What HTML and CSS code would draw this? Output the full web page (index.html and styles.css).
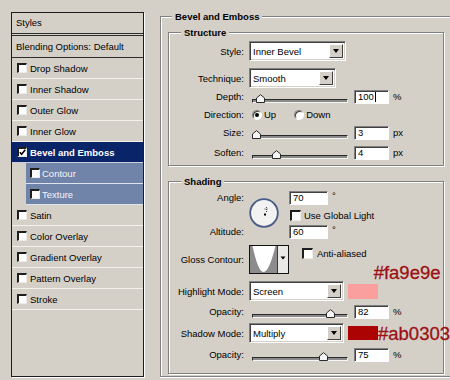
FILE: index.html
```html
<!DOCTYPE html>
<html>
<head>
<meta charset="utf-8">
<link rel="stylesheet" href="styles.css">
</head>
<body>
<div class="dialog">
  <div class="styles-list">
    <div class="list-header">Styles</div>
    <div class="list-blend">Blending Options: Default</div>
    <div class="list-row"><span class="cb"></span>Drop Shadow</div>
    <div class="list-row"><span class="cb"></span>Inner Shadow</div>
    <div class="list-row"><span class="cb"></span>Outer Glow</div>
    <div class="list-row"><span class="cb"></span>Inner Glow</div>
    <div class="list-row selected"><span class="cb"><svg width="7" height="7" viewBox="0 0 7 7"><path d="M0.8 3.2 L2.6 5.2 L6.3 0.8" fill="none" stroke="#000" stroke-width="1.6"/></svg></span>Bevel and Emboss</div>
    <div class="list-row sub"><span class="cb"></span>Contour</div>
    <div class="list-row sub"><span class="cb"></span>Texture</div>
    <div class="list-row"><span class="cb"></span>Satin</div>
    <div class="list-row"><span class="cb"></span>Color Overlay</div>
    <div class="list-row"><span class="cb"></span>Gradient Overlay</div>
    <div class="list-row"><span class="cb"></span>Pattern Overlay</div>
    <div class="list-row"><span class="cb"></span>Stroke</div>
  </div>

  <div class="group outer">
    <div class="group-title title-outer">Bevel and Emboss</div>

    <div class="group inner structure">
      <div class="group-title title-inner">Structure</div>

      <div class="row h20">
        <span class="lbl">Style:</span>
        <div class="select w-style"><span class="sel-text">Inner Bevel</span><span class="drop"></span></div>
      </div>
      <div class="row h20 mt7">
        <span class="lbl">Technique:</span>
        <div class="select w-tech"><span class="sel-text">Smooth</span><span class="drop"></span></div>
      </div>
      <div class="row h17">
        <span class="lbl">Depth:</span>
        <div class="slider"><span class="track"></span><svg class="thumb" style="left:calc(8% - 4px)" width="9" height="9" viewBox="0 0 9 9"><path d="M0.5 8.5 V4 L4.5 0.7 L8.5 4 V8.5 Z" fill="#f4f4f4" stroke="#2a2a2a"/></svg></div>
        <div class="num">100<span class="caret"></span></div>
        <span class="unit">%</span>
      </div>
      <div class="row h19">
        <span class="lbl">Direction:</span>
        <span class="radio on"></span><span class="radio-text">Up</span>
        <span class="radio second"></span><span class="radio-text">Down</span>
      </div>
      <div class="row h17">
        <span class="lbl">Size:</span>
        <div class="slider"><span class="track"></span><svg class="thumb" style="left:calc(4% - 4px)" width="9" height="9" viewBox="0 0 9 9"><path d="M0.5 8.5 V4 L4.5 0.7 L8.5 4 V8.5 Z" fill="#f4f4f4" stroke="#2a2a2a"/></svg></div>
        <div class="num">3</div>
        <span class="unit">px</span>
      </div>
      <div class="row h17 mt3">
        <span class="lbl">Soften:</span>
        <div class="slider"><span class="track"></span><svg class="thumb" style="left:calc(25% - 4px)" width="9" height="9" viewBox="0 0 9 9"><path d="M0.5 8.5 V4 L4.5 0.7 L8.5 4 V8.5 Z" fill="#f4f4f4" stroke="#2a2a2a"/></svg></div>
        <div class="num">4</div>
        <span class="unit">px</span>
      </div>
    </div>

    <div class="group inner shading">
      <div class="group-title title-inner">Shading</div>

      <div class="angle-block">
        <div class="angle-labels">
          <span class="alabel">Angle:</span>
          <span class="alabel">Altitude:</span>
        </div>
        <svg class="dial" width="30" height="30" viewBox="0 0 30 30">
          <circle cx="15" cy="15" r="13.8" fill="#f2f2f2" stroke="#4a5c86" stroke-width="1.8"/>
          <path d="M17.5 9 V14 M15.5 11 H19.5" stroke="#444" stroke-width="1" stroke-dasharray="1 1"/>
          <rect x="15" y="15.5" width="2" height="2" fill="#000"/>
        </svg>
        <div class="angle-controls">
          <div class="arow"><div class="num w-angle">70</div><span class="deg">°</span></div>
          <div class="arow"><span class="cb big"></span><span class="cb-text">Use Global Light</span></div>
          <div class="arow"><div class="num w-angle">60</div><span class="deg">°</span></div>
        </div>
      </div>

      <div class="row h29 mt6">
        <span class="lbl">Gloss Contour:</span>
        <svg class="contour" width="40" height="29" viewBox="0 0 40 29">
          <rect x="0.5" y="0.5" width="39" height="28" fill="#fff" stroke="#111"/>
          <rect x="1" y="1" width="27" height="27" fill="#8c8c8c"/>
          <path d="M3.5 1 C7 17 10.5 27 14.5 27 C18.5 27 22.5 17 26.5 1 Z" fill="#fff"/>
          <line x1="28.5" y1="1" x2="28.5" y2="28" stroke="#3a3a3a"/>
          <rect x="29" y="1" width="10" height="27" fill="#e9e8e4"/>
          <path d="M31.5 11.5 H36.5 L34 14.5 Z" fill="#000"/>
        </svg>
        <div class="aa"><span class="cb big"></span><span class="cb-text">Anti-aliased</span></div>
        <span class="hex hex-high">#fa9e9e</span>
      </div>

      <div class="row h20 mt7">
        <span class="lbl">Highlight Mode:</span>
        <div class="select w-mode"><span class="sel-text">Screen</span><span class="drop"></span></div>
        <span class="swatch sw-high"></span>
      </div>
      <div class="row h17 mt2">
        <span class="lbl">Opacity:</span>
        <div class="slider"><span class="track"></span><svg class="thumb" style="left:calc(81% - 4px)" width="9" height="9" viewBox="0 0 9 9"><path d="M0.5 8.5 V4 L4.5 0.7 L8.5 4 V8.5 Z" fill="#f4f4f4" stroke="#2a2a2a"/></svg></div>
        <div class="num">82</div>
        <span class="unit">%</span>
      </div>
      <div class="row h20 mt3">
        <span class="lbl">Shadow Mode:</span>
        <div class="select w-mode"><span class="sel-text">Multiply</span><span class="drop"></span></div>
        <span class="swatch sw-shadow"></span>
        <span class="hex hex-shadow">#ab0303</span>
      </div>
      <div class="row h17 mt3">
        <span class="lbl">Opacity:</span>
        <div class="slider"><span class="track"></span><svg class="thumb" style="left:calc(74% - 4px)" width="9" height="9" viewBox="0 0 9 9"><path d="M0.5 8.5 V4 L4.5 0.7 L8.5 4 V8.5 Z" fill="#f4f4f4" stroke="#2a2a2a"/></svg></div>
        <div class="num">75</div>
        <span class="unit">%</span>
      </div>
    </div>
  </div>
</div>
</body>
</html>
```
FILE: styles.css
```css
* { box-sizing: border-box; }

html, body {
  margin: 0;
  padding: 0;
  overflow: hidden;
}

body {
  width: 450px;
  height: 380px;
  background: #d4d0c8;
  font-family: "Liberation Sans", Arial, sans-serif;
  font-size: 9.5px;
  color: #000;
}

.dialog {
  display: flex;
  align-items: flex-start;
  padding-left: 11px;
}

/* ---------- left list ---------- */
.styles-list {
  margin-top: 12px;
  width: 133px;
  height: 365px;
  border: 1px solid #1c1c1c;
  box-shadow: 1px 1px 0 #fff;
  flex: none;
}

.list-header {
  height: 21px;
  line-height: 20px;
  padding-left: 4px;
  border-bottom: 1px solid #2e2e2e;
  margin-bottom: 1px;
}

.list-blend {
  height: 23px;
  line-height: 21px;
  padding-left: 4px;
  border-top: 1px solid #2e2e2e;
  border-bottom: 1px solid #2e2e2e;
}

.list-row {
  height: 21px;
  display: flex;
  align-items: center;
  padding-left: 5px;
  border-bottom: 1px solid #f3f1ec;
}

.cb {
  width: 10px;
  height: 10px;
  margin-right: 3px;
  background: #fff;
  border-style: solid;
  border-width: 2px 1px 1px 2px;
  border-color: #1e1e1e #ecebe8 #ecebe8 #1e1e1e;
  flex: none;
  display: flex;
  align-items: center;
  justify-content: center;
}

.cb svg { display: block; }

.list-row.selected {
  background: #0a246a;
  color: #fff;
  font-weight: bold;
  border-bottom-color: #c9cfdf;
}

.list-row.sub {
  margin-left: 14px;
  padding-left: 4px;
  background: #7083a9;
  color: #f4f6fb;
  border-bottom-color: #dfe3ec;
}

.list-row.sub .cb { margin-right: 2px; }

/* ---------- group boxes ---------- */
.group {
  position: relative;
  border: 1px solid #808080;
}

.group.outer {
  margin-top: 16px;
  margin-left: 16px;
  width: 300px;
  height: 361px;
  border-right: none;
  padding-left: 7px;
  box-shadow: inset 1px 1px 0 #fff, 0 1px 0 #fff;
  flex: none;
}

.group.inner {
  width: 276px;
  margin-top: 15px;
  box-shadow: inset 1px 1px 0 #fff, 1px 1px 0 #fff;
}

.group-title {
  position: absolute;
  top: -7px;
  padding: 0 3px;
  line-height: 13px;
  background: #d4d0c8;
  font-weight: bold;
  white-space: nowrap;
}

.title-outer { left: 11px; }
.title-inner { left: 12px; }

.structure { padding: 8px 0 4px 0; }
.shading { padding: 9px 0 10px 0; }

/* ---------- rows ---------- */
.row {
  display: flex;
  align-items: center;
}

.h17 { height: 17px; }
.h19 { height: 19px; }
.h20 { height: 20px; }
.h29 { height: 29px; }
.mt2 { margin-top: 2px; }
.mt3 { margin-top: 3px; }
.mt6 { margin-top: 6px; }
.mt7 { margin-top: 7px; }

.lbl {
  width: 75px;
  margin-right: 5px;
  text-align: right;
  flex: none;
  white-space: nowrap;
}

/* select */
.select {
  height: 20px;
  display: flex;
  padding: 2px;
  background: #fff;
  border: 1px solid;
  border-color: #808080 #fff #fff #808080;
  box-shadow: inset 1px 1px 0 #404040, inset -1px -1px 0 #d4d0c8;
  flex: none;
}

.w-style { width: 97px; }
.w-tech { width: 87px; }
.w-mode { width: 95px; }

.sel-text {
  flex: 1;
  display: flex;
  align-items: center;
  padding-left: 1px;
}

.drop {
  width: 14px;
  background: #d4d0c8;
  border: 1px solid;
  border-color: #fff #404040 #404040 #fff;
  display: flex;
  align-items: center;
  justify-content: center;
}

.drop::after {
  content: "";
  border-left: 3.5px solid transparent;
  border-right: 3.5px solid transparent;
  border-top: 4px solid #000;
}

/* number field */
.num {
  width: 35px;
  height: 14px;
  margin-left: 6px;
  padding-left: 3px;
  line-height: 12px;
  background: #fff;
  border: 1px solid;
  border-color: #808080 #fff #fff #808080;
  box-shadow: inset 1px 1px 0 #404040;
  display: flex;
  align-items: center;
  flex: none;
}

.caret {
  width: 1px;
  height: 10px;
  margin-left: 1px;
  background: #000;
}

.unit { margin-left: 4px; }

/* slider */
.slider {
  position: relative;
  width: 96px;
  height: 10px;
  margin-left: 3px;
  margin-top: 2px;
  flex: none;
}

.track {
  position: absolute;
  left: 0;
  right: 0;
  bottom: 0;
  height: 4px;
  background: #8a8a8a;
  border: 1px solid;
  border-color: #2a2a2a #f4f4f4 #f4f4f4 #2a2a2a;
}

.thumb {
  position: absolute;
  bottom: 0;
  display: block;
}

/* radio */
.radio {
  width: 10px;
  height: 10px;
  margin-left: 3px;
  border-radius: 50%;
  background: #fff;
  border: 1px solid;
  border-color: #808080 #fff #fff #808080;
  box-shadow: inset 1px 1px 0 #404040;
  display: flex;
  align-items: center;
  justify-content: center;
  flex: none;
}

.radio.on::after {
  content: "";
  width: 4px;
  height: 4px;
  border-radius: 50%;
  background: #000;
}

.radio.second { margin-left: 18px; }

.radio-text { margin-left: 2px; }

/* shading angle block */
.angle-block {
  display: flex;
  height: 48px;
}

.angle-labels {
  width: 75px;
  margin-right: 5px;
  display: flex;
  flex-direction: column;
  justify-content: space-between;
  text-align: right;
  flex: none;
}

.alabel { line-height: 14px; }

.dial {
  display: block;
  margin-top: 7px;
  margin-right: 10px;
  flex: none;
}

.angle-controls {
  display: flex;
  flex-direction: column;
  justify-content: space-between;
}

.arow {
  display: flex;
  align-items: center;
}

.num.w-angle {
  width: 39px;
  margin-left: 0;
}

.deg {
  margin-left: 4px;
  align-self: flex-start;
  line-height: 10px;
}

.cb.big {
  width: 11px;
  height: 11px;
  margin-left: 1px;
}

.cb-text { margin-left: 0; }

.contour {
  display: block;
  flex: none;
}

.aa {
  display: flex;
  align-items: center;
  align-self: flex-start;
  margin-top: 3px;
  margin-left: 13px;
}

.aa .cb.big { margin-left: 0; margin-right: 4px; }

.hex {
  font-size: 18.5px;
  color: #9c0f12;
  white-space: nowrap;
  line-height: 21px;
  -webkit-text-stroke: 0.3px #9c0f12;
}

.hex-high {
  align-self: flex-end;
  margin-bottom: -9px;
  margin-left: 7px;
}

.swatch {
  width: 30px;
  height: 15px;
  margin-left: 4px;
  flex: none;
}

.sw-high { background: #fa9e9e; }
.sw-shadow { background: #ab0303; height: 14px; }
```
